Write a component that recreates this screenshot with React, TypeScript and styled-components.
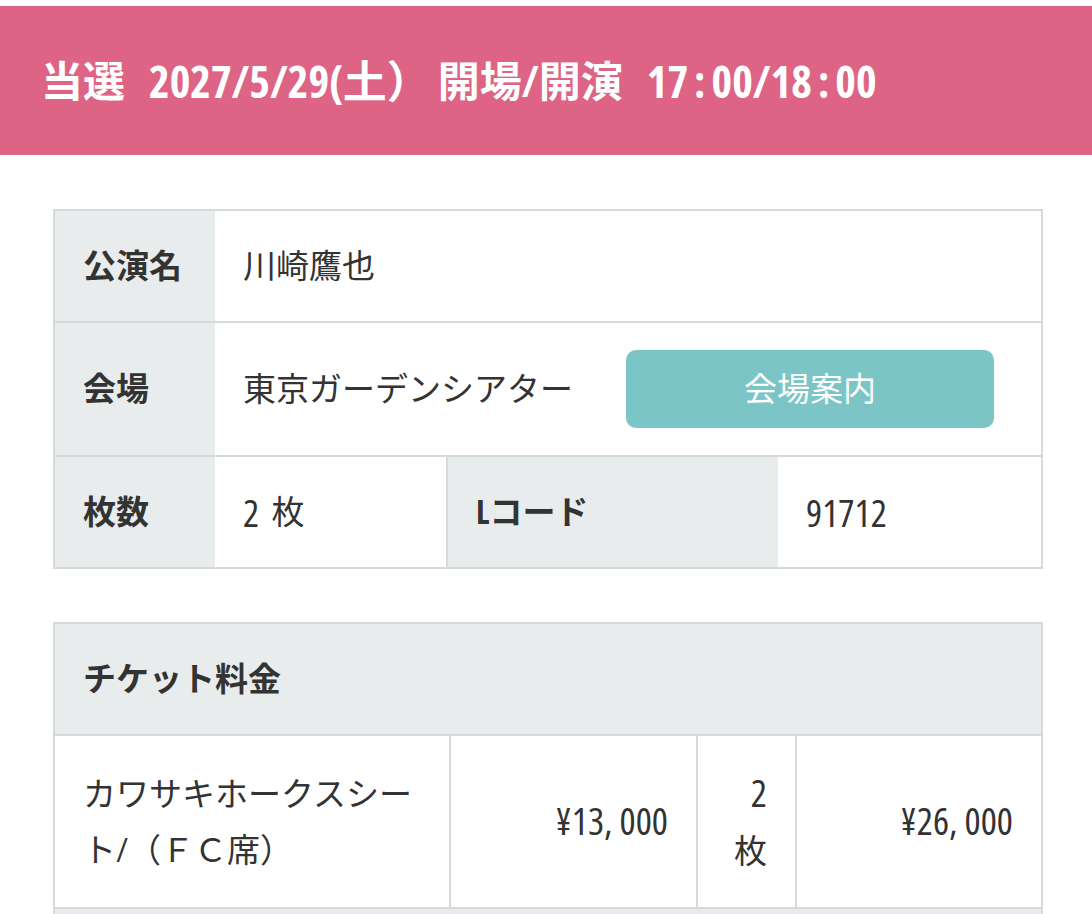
import styled, { createGlobalStyle } from "styled-components";

const GlobalStyle = createGlobalStyle`
  body {
    margin: 0;
    background: #fff;
    color: #333;
    font-family: "Open Sans", "Noto Sans CJK JP", sans-serif;
    font-stretch: 75%;
  }
`;

const BORDER = "2px solid #d6dadb";
const GRAY = "#e8eced";

const DIV_Page = styled.div`
  padding: 6px 0 0;
`;

const HEADER_Result = styled.header`
  display: flex;
  align-items: center;
  column-gap: 24px;
  height: 149px;
  padding-left: 41px;
  background: #de6486;
  color: #fff;
  font-size: 42px;
  font-weight: 700;
  line-height: 1;
`;

const SPAN_Latin = styled.span<{ $tail?: number }>`
  font-size: 44px;
  margin-right: ${(p) => (p.$tail ? `${p.$tail}px` : 0)};
`;

const SPAN_Colon = styled.span`
  padding: 0 6px;
`;

// condensed digits sit a little larger than the kana around them
const SPAN_Num = styled.span`
  font-size: 38px;
`;

const DIV_Content = styled.div`
  display: flex;
  flex-direction: column;
  row-gap: 53px;
  padding: 54px 49px 0 53px;
`;

const DIV_InfoBox = styled.div`
  border: ${BORDER};
`;

const DIV_Row = styled.div<{ $cols: string; $first?: boolean }>`
  display: grid;
  grid-template-columns: ${(p) => p.$cols};
  border-top: ${(p) => (p.$first ? "none" : BORDER)};
`;

const DIV_Cell = styled.div<{ $head?: boolean; $divider?: boolean }>`
  display: flex;
  align-items: center;
  padding: 27px 28px;
  font-size: 33px;
  line-height: 56px;
  font-weight: ${(p) => (p.$head ? 700 : 400)};
  background: ${(p) => (p.$head ? GRAY : "#fff")};
  border-left: ${(p) => (p.$divider ? BORDER : "none")};
`;

const A_VenueButton = styled.a`
  display: flex;
  align-items: center;
  justify-content: center;
  flex: 0 0 368px;
  height: 78px;
  margin: 0 19px 0 auto;
  border-radius: 10px;
  background: #7cc5c6;
  color: #fff;
  font-size: 33px;
  text-decoration: none;
`;

const TABLE_Price = styled.table`
  width: 100%;
  border-collapse: collapse;
  border: ${BORDER};
  table-layout: fixed;

  th,
  td {
    border: ${BORDER};
    padding: 28px;
    font-size: 33px;
    line-height: 56px;
    vertical-align: middle;
  }
`;

const TH_Caption = styled.th`
  background: ${GRAY};
  text-align: left;
  font-weight: 700;

  && {
    padding: 27px 28px;
  }
`;

const TD_Num = styled.td`
  text-align: right;
`;

const TD_Total = styled.td`
  background: ${GRAY};
  height: 56px;
`;

const tickets = [
  {
    name: "カワサキホークスシート/（ＦＣ席）",
    price: "¥13, 000",
    count: 2,
    subtotal: "¥26, 000",
  },
];

const App = () => {
  return (
    <DIV_Page>
      <GlobalStyle />
      <HEADER_Result>
        <span>当選</span>
        <SPAN_Latin $tail={-17}>2027/5/29(土）</SPAN_Latin>
        <span>開場/開演</span>
        <SPAN_Latin>
          17<SPAN_Colon>:</SPAN_Colon>00/18<SPAN_Colon>:</SPAN_Colon>00
        </SPAN_Latin>
      </HEADER_Result>

      <DIV_Content>
        <DIV_InfoBox>
          <DIV_Row $cols="160px 1fr" $first>
            <DIV_Cell $head>公演名</DIV_Cell>
            <DIV_Cell>川崎鷹也</DIV_Cell>
          </DIV_Row>
          <DIV_Row $cols="160px 1fr">
            <DIV_Cell $head>会場</DIV_Cell>
            <DIV_Cell>
              東京ガーデンシアター
              <A_VenueButton href="#">会場案内</A_VenueButton>
            </DIV_Cell>
          </DIV_Row>
          <DIV_Row $cols="160px 231px 332px 1fr">
            <DIV_Cell $head>枚数</DIV_Cell>
            <DIV_Cell>
              <SPAN_Num>2</SPAN_Num>&nbsp;&nbsp;枚
            </DIV_Cell>
            <DIV_Cell $head $divider>
              Lコード
            </DIV_Cell>
            <DIV_Cell>
              <SPAN_Num>91712</SPAN_Num>
            </DIV_Cell>
          </DIV_Row>
        </DIV_InfoBox>

        <TABLE_Price>
          <colgroup>
            <col style={{ width: 396 }} />
            <col style={{ width: 247 }} />
            <col style={{ width: 99 }} />
            <col />
          </colgroup>
          <thead>
            <tr>
              <TH_Caption colSpan={4}>チケット料金</TH_Caption>
            </tr>
          </thead>
          <tbody>
            {tickets.map((t) => (
              <tr key={t.name}>
                <td>{t.name}</td>
                <TD_Num>
                  <SPAN_Num>{t.price}</SPAN_Num>
                </TD_Num>
                <TD_Num>
                  <SPAN_Num>{t.count}</SPAN_Num> 枚
                </TD_Num>
                <TD_Num>
                  <SPAN_Num>{t.subtotal}</SPAN_Num>
                </TD_Num>
              </tr>
            ))}
            <tr>
              <TD_Total colSpan={4} />
            </tr>
          </tbody>
        </TABLE_Price>
      </DIV_Content>
    </DIV_Page>
  );
};

export default App;
